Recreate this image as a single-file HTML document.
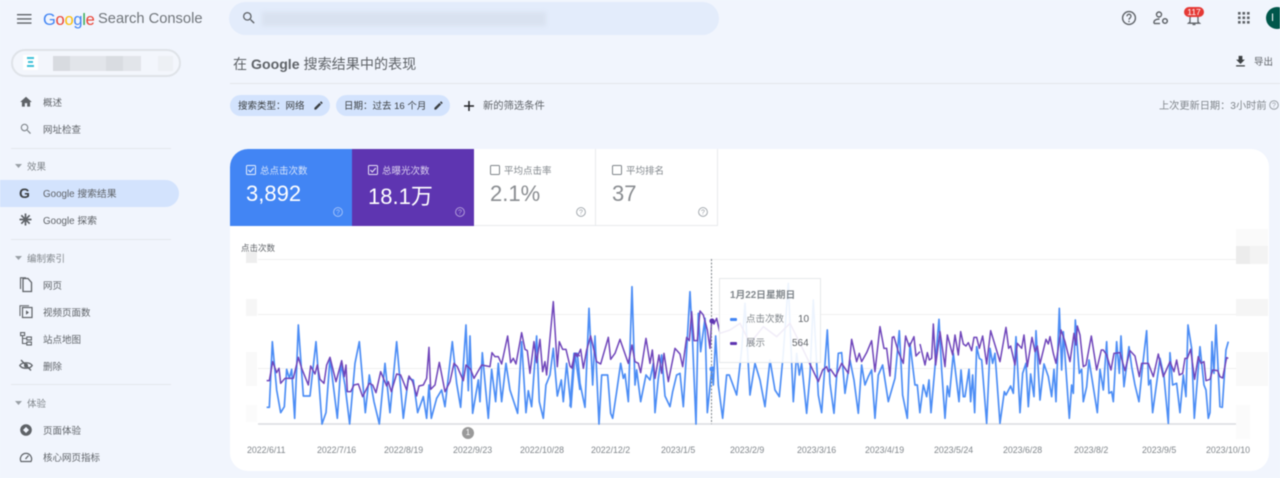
<!DOCTYPE html>
<html lang="zh-CN"><head><meta charset="utf-8"><title>Google Search Console</title>
<style>
html,body{margin:0;padding:0;width:1280px;height:478px;overflow:hidden;background:#f1f5fd}
#w{position:relative;width:1280px;height:478px;overflow:hidden;background:#f1f5fd;font-family:"Liberation Sans","Noto Sans CJK SC",sans-serif;filter:blur(.55px)}
#w div,#w svg{position:absolute}
.t{white-space:nowrap;line-height:16px;height:16px;color:#5f6368;font-size:9.5px;margin-top:1.5px}
.n{margin-top:0}
.s{color:#80868b}
.ic{fill:#5f6368}
.q{font-size:7px;text-anchor:middle;font-family:"Liberation Sans",sans-serif}
</style></head><body><div id="w">

<!-- header -->
<svg style="left:17px;top:14px" width="15" height="10"><path d="M0 0h14.500v1.400H0zM0 4.200h14.500v1.400H0zM0 8.400h14.500v1.400H0z" fill="#5f6368"/></svg>
<div class="t n" style="left:43px;top:10px;height:20px;line-height:20px;font-size:16.500px;letter-spacing:-.3px"><span style="color:#4285f4">G</span><span style="color:#ea4335">o</span><span style="color:#fbbc05">o</span><span style="color:#4285f4">g</span><span style="color:#34a853">l</span><span style="color:#ea4335">e</span></div>
<div class="t n" style="left:98px;top:9px;height:20px;line-height:20px;font-size:14.700px;color:#70757a">Search Console</div>

<div style="left:229px;top:2px;width:490px;height:33px;border-radius:17px;background:#e3ecfb"></div>
<svg style="left:241px;top:10px" width="16" height="16" viewBox="0 0 24 24"><path class="ic" d="M15.500 14h-.79l-.28-.27A6.470 6.470 0 0 0 16 9.500 6.500 6.500 0 1 0 9.500 16c1.610 0 3.090-.59 4.230-1.570l.27.28v.79l5 4.990L20.490 19l-4.990-5zm-6 0C7.010 14 5 11.990 5 9.500S7.010 5 9.500 5 14 7.010 14 9.500 11.990 14 9.500 14z"/></svg>
<div style="left:262px;top:12px;width:284px;height:14px;background:#d9e2f0;filter:blur(2px)"></div>

<!-- top right icons -->
<svg style="left:1121px;top:10px" width="16" height="16" viewBox="0 0 16 16"><circle cx="8" cy="8" r="6.400" fill="none" stroke="#5f6368" stroke-width="1.400"/><path d="M6 6.300a2 2 0 1 1 3.200 1.500c-.8.600-1.200 1-1.200 2" fill="none" stroke="#5f6368" stroke-width="1.300"/><rect x="7.300" y="10.800" width="1.400" height="1.400" fill="#5f6368"/></svg>
<svg style="left:1153px;top:11px" width="16" height="14" viewBox="0 0 16 14"><circle cx="6" cy="3.500" r="2.500" fill="none" stroke="#5f6368" stroke-width="1.400"/><path d="M1 12.500v-1.500c0-2 3-3 5.500-3" fill="none" stroke="#5f6368" stroke-width="1.400"/><path d="M1 12.500h6" stroke="#5f6368" stroke-width="1.400"/><circle cx="12" cy="10" r="2.300" fill="none" stroke="#5f6368" stroke-width="1.500"/></svg>
<svg style="left:1187px;top:12px" width="14" height="14" viewBox="0 0 14 14"><path d="M3 10V6a4 4 0 0 1 8 0v4l1.500 1.200h-11z" fill="none" stroke="#5f6368" stroke-width="1.300"/><path d="M5.500 12.500h3" stroke="#5f6368" stroke-width="1.300"/></svg>
<div style="left:1184px;top:7px;width:20px;height:10px;background:#e53935;border-radius:5px;color:#fff;font-size:8.500px;line-height:10px;text-align:center">117</div>
<svg style="left:1238px;top:12px" width="12" height="12" viewBox="0 0 12 12" fill="#5f6368"><rect width="2.600" height="2.600"/><rect x="4.500" width="2.600" height="2.600"/><rect x="9" width="2.600" height="2.600"/><rect y="4.500" width="2.600" height="2.600"/><rect x="4.500" y="4.500" width="2.600" height="2.600"/><rect x="9" y="4.500" width="2.600" height="2.600"/><rect y="9" width="2.600" height="2.600"/><rect x="4.500" y="9" width="2.600" height="2.600"/><rect x="9" y="9" width="2.600" height="2.600"/></svg>
<div style="left:1266px;top:7px;width:22px;height:22px;border-radius:50%;background:#00574b;color:#fff;font-size:11px;line-height:22px;text-indent:5px">I</div>

<!-- property pill -->
<div style="left:11px;top:49px;width:166px;height:24px;border:2px solid #dfe3e8;border-radius:15px;background:#f3f6fc"></div>
<div style="left:23px;top:55px;width:15px;height:15px;background:#fff"></div>
<div style="left:27px;top:57px;width:7px;height:2px;background:#3fc1d9"></div>
<div style="left:28px;top:61px;width:5px;height:2px;background:#3fc1d9"></div>
<div style="left:27px;top:65px;width:7px;height:2px;background:#3fc1d9"></div>
<div style="left:53px;top:56px;width:88px;height:15px;background:#e2e5ea"></div>
<div style="left:53px;top:56px;width:17px;height:15px;background:#d8dbe0"></div>
<div style="left:106px;top:56px;width:17px;height:15px;background:#d9dce1"></div>
<div style="left:158px;top:56px;width:15px;height:15px;background:#edf0f4"></div>

<!-- sidebar -->
<div style="left:0;top:180px;width:179px;height:27px;background:#d3e3fd;border-radius:0 14px 14px 0"></div>
<div style="left:11px;top:148px;width:160px;height:1px;background:#e4e7ec"></div>
<div style="left:11px;top:239px;width:160px;height:1px;background:#e4e7ec"></div>
<div style="left:11px;top:384px;width:160px;height:1px;background:#e4e7ec"></div>

<svg style="left:19px;top:95px" width="14" height="14" viewBox="0 0 24 24"><path class="ic" d="M10 20v-6h4v6h5v-8h3L12 3 2 12h3v8z"/></svg>
<div class="t" style="left:43px;top:94px">概述</div>
<svg style="left:19px;top:122px" width="14" height="14" viewBox="0 0 24 24"><path fill="#80868b" d="M15.500 14h-.79l-.28-.27A6.470 6.470 0 0 0 16 9.500 6.500 6.500 0 1 0 9.500 16c1.610 0 3.090-.59 4.230-1.570l.27.28v.79l5 4.990L20.490 19l-4.990-5zm-6 0C7.010 14 5 11.990 5 9.500S7.010 5 9.500 5 14 7.010 14 9.500 11.990 14 9.500 14z"/></svg>
<div class="t" style="left:43px;top:121px">网址检查</div>

<svg style="left:15px;top:164px" width="7" height="4"><path d="M0 0h7L3.500 4z" fill="#9aa0a6"/></svg>
<div class="t s" style="left:27px;top:158px">效果</div>
<div class="t n" style="left:19px;top:184px;font-size:14px;height:18px;line-height:18px;font-weight:bold;color:#3c4043">G</div>
<div class="t" style="left:43px;top:185px;font-size:9.800px">Google 搜索结果</div>
<svg style="left:19px;top:213px" width="13" height="13" viewBox="0 0 13 13"><g stroke="#5f6368" stroke-width="1.700"><path d="M6.500 .5v12M.5 6.500h12M2.300 2.300l8.400 8.400M10.700 2.300l-8.400 8.400"/></g></svg>
<div class="t" style="left:43px;top:212px;font-size:9.800px">Google 探索</div>

<svg style="left:15px;top:256px" width="7" height="4"><path d="M0 0h7L3.500 4z" fill="#9aa0a6"/></svg>
<div class="t s" style="left:27px;top:250px">编制索引</div>
<svg style="left:19px;top:277px" width="14" height="16" viewBox="0 0 14 16"><path d="M4 1.500h5l3.500 4V14.500H4z" fill="none" stroke="#5f6368" stroke-width="1.300"/><path d="M1.500 12V.8H7" fill="none" stroke="#5f6368" stroke-width="1.100"/></svg>
<div class="t" style="left:43px;top:277px">网页</div>
<svg style="left:19px;top:305px" width="14" height="14" viewBox="0 0 14 14"><rect x="3.500" y="2.500" width="9.500" height="10" fill="none" stroke="#5f6368" stroke-width="1.200"/><path d="M1 11V.8h9" fill="none" stroke="#5f6368" stroke-width="1"/><path d="M7 5.200l3 2.300-3 2.300z" fill="#5f6368"/></svg>
<div class="t" style="left:43px;top:304px">视频页面数</div>
<svg style="left:20px;top:332px" width="12" height="14" viewBox="0 0 12 14"><g fill="none" stroke="#5f6368" stroke-width="1.100"><rect x=".6" y=".6" width="4" height="3"/><rect x="6.800" y="5" width="4.600" height="3"/><rect x="6.800" y="10" width="4.600" height="3"/><path d="M2.500 3.600V11.500h4.300M2.500 6.500h4.300"/></g></svg>
<div class="t" style="left:43px;top:331px">站点地图</div>
<svg style="left:19px;top:359px" width="14" height="13" viewBox="0 0 14 13"><path d="M.8 6.500C3 2.800 11 2.800 13.200 6.500 11 10.200 3 10.200.8 6.500z" fill="none" stroke="#5f6368" stroke-width="1.300"/><circle cx="7" cy="6.500" r="2" fill="#5f6368"/><path d="M2 1l10 10.500" stroke="#5f6368" stroke-width="1.300"/></svg>
<div class="t" style="left:43px;top:358px">删除</div>

<svg style="left:15px;top:401px" width="7" height="4"><path d="M0 0h7L3.500 4z" fill="#9aa0a6"/></svg>
<div class="t s" style="left:27px;top:395px">体验</div>
<svg style="left:20px;top:424px" width="12" height="12" viewBox="0 0 12 12"><circle cx="6" cy="6" r="5.800" fill="#5f6368"/><path d="M6 3l3 3-3 3-3-3z" fill="#f1f5fd"/></svg>
<div class="t" style="left:43px;top:422px">页面体验</div>
<svg style="left:19px;top:451px" width="14" height="12" viewBox="0 0 14 12"><path d="M2 10.500a5.600 5.600 0 1 1 10 0z" fill="none" stroke="#5f6368" stroke-width="1.200"/><path d="M6.500 8l3-3.500" stroke="#5f6368" stroke-width="1.300"/></svg>
<div class="t" style="left:43px;top:449px">核心网页指标</div>

<!-- title -->
<div class="t" style="left:233px;top:51.500px;height:22px;line-height:22px;font-size:14.100px;color:#5f6368">在 <span style="font-weight:bold">Google</span> 搜索结果中的表现</div>
<div style="left:230px;top:83px;width:1050px;height:1px;background:#e3e6ea"></div>
<svg style="left:1233px;top:54px" width="15" height="15" viewBox="0 0 24 24"><path fill="#3c4043" d="M19 9h-4V3H9v6H5l7 7 7-7zM5 18v2h14v-2H5z"/></svg>
<div class="t" style="left:1254px;top:53.500px">导出</div>

<!-- filters -->
<div style="left:230px;top:95px;width:100px;height:21px;border-radius:11px;background:#d3e3fd"></div>
<div class="t" style="left:238px;top:97px;color:#3c4043">搜索类型：网络</div>
<svg style="left:313px;top:100px" width="11" height="11" viewBox="0 0 24 24"><path fill="#3c4043" d="M3 17.250V21h3.750L17.810 9.940l-3.750-3.750L3 17.250zM20.710 7.040a1 1 0 0 0 0-1.410l-2.340-2.340a1 1 0 0 0-1.410 0l-1.830 1.830 3.750 3.750 1.830-1.830z"/></svg>
<div style="left:336px;top:95px;width:114px;height:21px;border-radius:11px;background:#d3e3fd"></div>
<div class="t" style="left:344px;top:97px;color:#3c4043">日期：过去 16 个月</div>
<svg style="left:433px;top:100px" width="11" height="11" viewBox="0 0 24 24"><path fill="#3c4043" d="M3 17.250V21h3.750L17.810 9.940l-3.750-3.750L3 17.250zM20.710 7.040a1 1 0 0 0 0-1.410l-2.340-2.340a1 1 0 0 0-1.410 0l-1.830 1.830 3.750 3.750 1.830-1.830z"/></svg>
<svg style="left:462px;top:99px" width="14" height="14" viewBox="0 0 14 14"><path d="M2 7h10M7 2v10" stroke="#202124" stroke-width="1.500"/></svg>
<div class="t" style="left:483px;top:97px;font-size:10.300px">新的筛选条件</div>
<div class="t s" style="left:1159px;top:97px;font-size:10.200px">上次更新日期：3小时前</div>
<svg style="left:1269px;top:100px" width="10" height="10" viewBox="0 0 10 10"><circle cx="5" cy="5" r="4.300" fill="none" stroke="#9aa0a6"/><text x="5" y="7.500" class="q" fill="#9aa0a6">?</text></svg>

<!-- card -->
<div style="left:230px;top:149px;width:1039px;height:322px;border-radius:18px;background:#fff;overflow:hidden">
  <div style="left:0;top:0;width:122px;height:77px;background:#4285f4"></div>
  <div style="left:122px;top:0;width:122px;height:77px;background:#5e35b1"></div>
  <div style="left:244px;top:0;width:121px;height:76px;border-right:1px solid #e8eaed;border-bottom:1px solid #e8eaed"></div>
  <div style="left:366px;top:0;width:121px;height:76px;border-right:1px solid #e8eaed;border-bottom:1px solid #e8eaed"></div>
</div>

<!-- metric tiles -->
<svg style="left:246px;top:165px" width="10" height="10" viewBox="0 0 10 10"><rect x=".5" y=".5" width="9" height="9" rx="1" fill="none" stroke="#e3edfd"/><path d="M2.300 5l2 2 3.500-4" fill="none" stroke="#e3edfd" stroke-width="1.100"/></svg>
<div class="t" style="left:260px;top:162px;color:#d6e4fc">总点击次数</div>
<div class="t n" style="left:246px;top:181px;height:26px;line-height:26px;font-size:22px;color:#fff">3,892</div>
<svg style="left:333px;top:207px" width="10" height="10" viewBox="0 0 10 10"><circle cx="5" cy="5" r="4.400" fill="none" stroke="#a9c6fa" stroke-width=".9"/><text x="5" y="7.500" class="q" fill="#a9c6fa">?</text></svg>

<svg style="left:368px;top:165px" width="10" height="10" viewBox="0 0 10 10"><rect x=".5" y=".5" width="9" height="9" rx="1" fill="none" stroke="#e8e0f5"/><path d="M2.300 5l2 2 3.500-4" fill="none" stroke="#e8e0f5" stroke-width="1.100"/></svg>
<div class="t" style="left:382px;top:162px;color:#dcd2f0">总曝光次数</div>
<div class="t n" style="left:368px;top:184px;height:26px;line-height:26px;font-size:22px;color:#fff">18.1万</div>
<svg style="left:455px;top:207px" width="10" height="10" viewBox="0 0 10 10"><circle cx="5" cy="5" r="4.400" fill="none" stroke="#b9a5de" stroke-width=".9"/><text x="5" y="7.500" class="q" fill="#b9a5de">?</text></svg>

<svg style="left:490px;top:165px" width="10" height="10" viewBox="0 0 10 10"><rect x=".5" y=".5" width="9" height="9" rx="1" fill="none" stroke="#80868b"/></svg>
<div class="t s" style="left:504px;top:162px">平均点击率</div>
<div class="t n" style="left:490px;top:181px;height:26px;line-height:26px;font-size:22px;color:#8a8d91">2.1%</div>
<svg style="left:576px;top:207px" width="10" height="10" viewBox="0 0 10 10"><circle cx="5" cy="5" r="4.400" fill="none" stroke="#9aa0a6" stroke-width=".9"/><text x="5" y="7.500" class="q" fill="#9aa0a6">?</text></svg>

<svg style="left:612px;top:165px" width="10" height="10" viewBox="0 0 10 10"><rect x=".5" y=".5" width="9" height="9" rx="1" fill="none" stroke="#80868b"/></svg>
<div class="t s" style="left:626px;top:162px">平均排名</div>
<div class="t n" style="left:612px;top:181px;height:26px;line-height:26px;font-size:22px;color:#8a8d91">37</div>
<svg style="left:698px;top:207px" width="10" height="10" viewBox="0 0 10 10"><circle cx="5" cy="5" r="4.400" fill="none" stroke="#9aa0a6" stroke-width=".9"/><text x="5" y="7.500" class="q" fill="#9aa0a6">?</text></svg>

<!-- chart axis label and blurred patches -->
<div class="t n" style="left:241px;top:240px;font-size:8.500px;color:#5f6368">点击次数</div>
<div style="left:246px;top:252px;width:11px;height:11px;background:#eeeeee"></div>
<div style="left:246px;top:299px;width:11px;height:17px;background:#f6f6f6"></div>
<div style="left:246px;top:352px;width:11px;height:34px;background:#f9f9f9"></div>
<div style="left:246px;top:405px;width:11px;height:17px;background:#fbfbfb"></div>
<div style="left:1236px;top:229px;width:32px;height:17px;background:#fafafa"></div>
<div style="left:1236px;top:246px;width:14px;height:18px;background:#ececec"></div>
<div style="left:1250px;top:246px;width:18px;height:18px;background:#f3f3f3"></div>
<div style="left:1236px;top:299px;width:32px;height:17px;background:#f5f5f5"></div>
<div style="left:1236px;top:352px;width:32px;height:34px;background:#f9f9f9"></div>
<div style="left:1236px;top:405px;width:14px;height:34px;background:#fbfbfb"></div>

<!-- chart -->
<svg style="left:0;top:0" width="1280" height="478" viewBox="0 0 1280 478">
<g stroke="#f0f0f0" stroke-width="1"><path d="M258 259.500H1236M258 314.500H1236M258 368.500H1236"/></g>
<path d="M258 424H1236" stroke="#dadce0" stroke-width="1.500"/>
<g fill="none" stroke-width="5" stroke-linejoin="round" stroke="#4c8df5">
<polyline transform="translate(230 250) scale(.3333)" points="110,472 118,472 127,275 140,420 152,488 163,470 170,358 178,385 185,358 194,505 205,225 220,438 240,438 258,275 276,522 288,488 300,325 322,505 333,340 345,405 359,522 375,340 388,275 406,488 418,375 432,455 448,522 465,340 480,488 500,275 520,505 535,385 550,390 563,488 580,440 590,505 597,405 604,505 620,445 635,420 645,470 667,275 680,400 692,472 708,225 715,422 720,258 728,490 745,390 750,455 757,308 775,505 785,358 797,455 805,340 815,455 828,340 840,420 863,490 875,275 888,488 895,422 905,470 920,258 928,455 940,505 948,405 960,375 970,295 982,438 994,390 1000,455 1010,340 1023,472 1035,310 1050,420"/>
<polyline transform="translate(570 250) scale(.3333)" points="0,470 12,310 22,310 30,400 45,472 57,175 68,405 75,258 87,522 95,375 113,375 122,490 128,505 140,425 152,340 160,385 165,372 175,455 186,110 195,405 200,360 212,455 228,375 240,390 250,340 255,488 265,385 275,315 285,438 300,470 308,425 320,375 330,370 340,470 350,300 360,125 368,280 378,522 385,190 392,305 405,205 412,488 425,360 430,405 437,258 445,405 458,505 470,375 478,375 500,435 515,300 525,160 540,435 555,340 570,390 585,470 600,330 615,420 628,440 640,310 655,100 670,455 680,310 688,375 695,340 710,490 720,375 730,150 745,435 755,488 772,240 780,400 792,490 805,310 815,308 825,430 840,330 852,390 865,490 875,345 885,405 895,380 905,360 915,505 925,375 938,345 955,455 975,385 988,242 998,435 1012,505 1020,280 1035,405 1042,405 1050,490"/>
<polyline transform="translate(920 220) scale(.3333)" points="0,575 10,495 20,530 27,480 33,578 45,440 57,298 65,450 75,595 82,498 88,530 100,400 117,545 123,450 130,530 135,530 147,448 152,545 158,465 164,578 170,380 178,415 185,420 200,610 210,385 218,430 225,400 240,610 253,515 258,525 272,498 280,520 288,350 300,578 308,460 318,430 325,560 332,462 342,530 348,332 360,540 372,432 385,470 395,530 402,448 408,545 418,265 425,450 430,335 448,595 455,495 460,520 466,300 478,460 485,448 490,545 500,500 507,420 515,470 532,578 540,448 550,510 560,365 567,520 575,515 580,545 590,365 598,460 603,348 612,500 627,380 635,440 645,495 657,545 667,445 680,332 686,495 692,480 698,578 720,415 732,470 745,610 750,398 758,495 770,490 780,578 790,465 798,530 804,315 815,385 823,595 840,380 852,495 858,510 865,595 870,578 876,365 882,460 888,315 900,560 907,562 918,390 925,365"/>
</g>
<g fill="none" stroke-width="4.500" stroke-linejoin="round" stroke="#6f45ba">
<polyline transform="translate(230 250) scale(.3333)" points="110,392 118,392 128,335 140,368 147,355 152,400 165,385 190,385 205,322 215,355 235,405 242,348 255,372 262,345 270,388 282,400 290,345 300,322 318,395 335,332 343,380 348,345 352,425 362,425 372,405 385,402 398,440 418,400 428,405 438,428 452,365 470,408 475,395 484,425 500,372 512,375 530,420 537,378 548,395 560,438 567,408 580,405 590,385 597,292 602,418 615,405 628,337 645,425 660,395 672,340 682,350 700,392 708,345 722,358 732,385 755,345 780,350 786,308 795,320 805,320 815,342 833,258 842,338 850,325 858,342 875,248 885,298 892,302 900,370 912,275 920,338 930,268 938,365 945,335 950,375 970,155 982,350 988,275 998,298 1008,298 1020,348 1027,355 1035,310 1050,318"/>
<polyline transform="translate(570 250) scale(.3333)" points="0,350 5,352 15,310 22,320 32,298 40,355 50,300 62,258 80,335 92,342 115,262 122,328 135,310 150,268 175,340 186,285 195,335 205,340 212,368 228,265 240,340 247,300 255,385 267,315 275,370 282,310 295,395 315,295 330,312 338,350 350,262 358,272 365,185 372,272 382,272 390,183 400,195 412,240 420,295 425,212 432,222 440,205 450,250 480,240 510,220 540,280 580,230 620,260 660,220 700,300 745,395 758,360 770,350 775,365 782,358 797,380 815,340 835,370 845,268 860,335 868,310 875,335 890,308 905,272 915,365 930,230 942,295 950,295 960,378 967,262 972,260 985,305 1000,340 1007,258 1018,290 1032,260 1038,318 1050,305"/>
<polyline transform="translate(920 220) scale(.3333)" points="0,372 15,435 22,398 28,420 35,415 40,312 47,435 60,335 75,440 82,345 98,405 105,345 115,405 122,335 130,372 138,378 145,368 155,392 162,352 170,352 178,385 188,348 200,432 212,332 225,375 240,425 258,322 266,385 272,378 285,435 292,370 305,385 312,345 322,440 336,352 345,395 352,378 360,432 378,358 385,372 390,350 400,400 408,430 423,330 435,365 450,425 462,340 468,375 472,318 480,345 490,440 498,435 514,348 530,450 544,390 550,390 560,405 573,450 582,400 600,398 615,452 630,392 645,408 658,470 665,430 685,430 700,470 715,402 730,470 750,425 762,455 770,420 778,465 788,460 795,415 802,415 812,388 824,478 835,410 843,430 852,425 858,482 870,478 878,450 893,452 900,470 908,474 920,413 925,415"/>
</g>
<path d="M711.500 259V424" stroke="#80868b" stroke-width="1" stroke-dasharray="2 1.500"/>
<circle cx="712" cy="369" r="2.600" fill="#4c8df5"/>
<circle cx="712" cy="321" r="2.600" fill="#5e35b1"/>
</svg>

<!-- flag marker -->
<div style="left:462px;top:427px;width:12px;height:12px;border-radius:50%;background:#9a9a9a;color:#fff;font-size:8px;line-height:12px;text-align:center">1</div>

<!-- tooltip -->
<div style="left:719px;top:278px;width:100px;height:83px;background:rgba(255,255,255,.9);border:1px solid #e6e8eb"></div>
<div class="t" style="left:730px;top:286px;font-size:9.800px;font-weight:bold;color:#80868b">1月22日星期日</div>
<div style="left:730px;top:318px;width:7px;height:2.500px;border-radius:1px;background:#4285f4"></div>
<div class="t" style="left:746px;top:310.500px;color:#80868b">点击次数</div>
<div class="t" style="left:798px;top:310.500px;font-size:10px;color:#5f6368">10</div>
<div style="left:730px;top:342px;width:7px;height:2.500px;border-radius:1px;background:#5e35b1"></div>
<div class="t" style="left:746px;top:334.500px;color:#80868b">展示</div>
<div class="t" style="left:792px;top:334.500px;font-size:10px;color:#5f6368">564</div>

<!-- x axis -->
<div class="t s n" style="left:247px;top:442px;font-size:8.800px">2022/6/11</div>
<div class="t s n" style="left:317px;top:442px;font-size:8.800px">2022/7/16</div>
<div class="t s n" style="left:384px;top:442px;font-size:8.800px">2022/8/19</div>
<div class="t s n" style="left:453px;top:442px;font-size:8.800px">2022/9/23</div>
<div class="t s n" style="left:520px;top:442px;font-size:8.800px">2022/10/28</div>
<div class="t s n" style="left:591px;top:442px;font-size:8.800px">2022/12/2</div>
<div class="t s n" style="left:661px;top:442px;font-size:8.800px">2023/1/5</div>
<div class="t s n" style="left:730px;top:442px;font-size:8.800px">2023/2/9</div>
<div class="t s n" style="left:797px;top:442px;font-size:8.800px">2023/3/16</div>
<div class="t s n" style="left:865px;top:442px;font-size:8.800px">2023/4/19</div>
<div class="t s n" style="left:934px;top:442px;font-size:8.800px">2023/5/24</div>
<div class="t s n" style="left:1003px;top:442px;font-size:8.800px">2023/6/28</div>
<div class="t s n" style="left:1074px;top:442px;font-size:8.800px">2023/8/2</div>
<div class="t s n" style="left:1142px;top:442px;font-size:8.800px">2023/9/5</div>
<div class="t s n" style="left:1206px;top:442px;font-size:8.800px">2023/10/10</div>

</div></body></html>
